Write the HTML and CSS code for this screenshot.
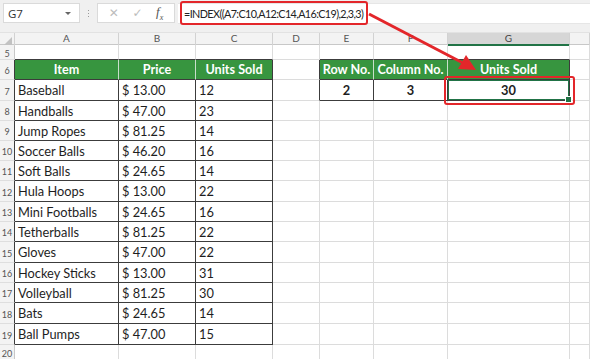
FILE: index.html
```html
<!DOCTYPE html>
<html lang="en">
<head>
  <meta charset="UTF-8" />
  <title>INDEX with multiple ranges</title>
  <link rel="stylesheet" href="styles.css">
</head>
<body>
  <div class="app">
    <!-- formula bar -->
    <div class="toolbar">
      <div class="namebox"><span>G7</span><span class="caret"></span></div>
      <div class="grip"><i></i><i></i><i></i></div>
      <div class="fxbox">
        <span class="btn">✕</span>
        <span class="btn">✓</span>
        <span class="fx">f<sub>x</sub></span>
      </div>
      <div class="formula"><span class="callout">=INDEX((A7:C10,A12:C14,A16:C19),2,3,3)</span></div>
    </div>

    <!-- sheet -->
    <div class="sheet">
      <div class="row colhead">
        <div class="corner"></div><div>A</div><div>B</div><div>C</div><div>D</div><div>E</div><div>F</div><div class="active">G</div><div></div>
      </div>
      <div class="row r5">
        <div class="rh">5</div><div class="c bb"></div><div class="c bb"></div><div class="c bb"></div><div class="c"></div><div class="c bb"></div><div class="c bb"></div><div class="c bb"></div><div class="c"></div>
      </div>
      <div class="row">
        <div class="rh edge">6</div><div class="c t hd">Item</div><div class="c t hd">Price</div><div class="c t hd">Units Sold</div><div class="c br"></div><div class="c t hd">Row No.</div><div class="c t hd">Column No.</div><div class="c t hd">Units Sold</div><div class="c"></div>
      </div>
      <div class="row h21">
        <div class="rh edge">7</div><div class="c t">Baseball</div><div class="c t">$ 13.00</div><div class="c t">12</div><div class="c br"></div><div class="c t mid">2</div><div class="c t mid">3</div><div class="c t mid sel">30</div><div class="c"></div>
      </div>
      <div class="row">
        <div class="rh edge">8</div><div class="c t">Handballs</div><div class="c t">$ 47.00</div><div class="c t">23</div><div class="c"></div><div class="c"></div><div class="c"></div><div class="c"></div><div class="c"></div>
      </div>
      <div class="row">
        <div class="rh edge">9</div><div class="c t">Jump Ropes</div><div class="c t">$ 81.25</div><div class="c t">14</div><div class="c"></div><div class="c"></div><div class="c"></div><div class="c"></div><div class="c"></div>
      </div>
      <div class="row">
        <div class="rh edge">10</div><div class="c t">Soccer Balls</div><div class="c t">$ 46.20</div><div class="c t">16</div><div class="c"></div><div class="c"></div><div class="c"></div><div class="c"></div><div class="c"></div>
      </div>
      <div class="row">
        <div class="rh edge">11</div><div class="c t">Soft Balls</div><div class="c t">$ 24.65</div><div class="c t">14</div><div class="c"></div><div class="c"></div><div class="c"></div><div class="c"></div><div class="c"></div>
      </div>
      <div class="row h21">
        <div class="rh edge">12</div><div class="c t">Hula Hoops</div><div class="c t">$ 13.00</div><div class="c t">22</div><div class="c"></div><div class="c"></div><div class="c"></div><div class="c"></div><div class="c"></div>
      </div>
      <div class="row">
        <div class="rh edge">13</div><div class="c t">Mini Footballs</div><div class="c t">$ 24.65</div><div class="c t">16</div><div class="c"></div><div class="c"></div><div class="c"></div><div class="c"></div><div class="c"></div>
      </div>
      <div class="row">
        <div class="rh edge">14</div><div class="c t">Tetherballs</div><div class="c t">$ 81.25</div><div class="c t">22</div><div class="c"></div><div class="c"></div><div class="c"></div><div class="c"></div><div class="c"></div>
      </div>
      <div class="row h21">
        <div class="rh edge">15</div><div class="c t">Gloves</div><div class="c t">$ 47.00</div><div class="c t">22</div><div class="c"></div><div class="c"></div><div class="c"></div><div class="c"></div><div class="c"></div>
      </div>
      <div class="row">
        <div class="rh edge">16</div><div class="c t">Hockey Sticks</div><div class="c t">$ 13.00</div><div class="c t">31</div><div class="c"></div><div class="c"></div><div class="c"></div><div class="c"></div><div class="c"></div>
      </div>
      <div class="row">
        <div class="rh edge">17</div><div class="c t">Volleyball</div><div class="c t">$ 81.25</div><div class="c t">30</div><div class="c"></div><div class="c"></div><div class="c"></div><div class="c"></div><div class="c"></div>
      </div>
      <div class="row h21">
        <div class="rh edge">18</div><div class="c t">Bats</div><div class="c t">$ 24.65</div><div class="c t">14</div><div class="c"></div><div class="c"></div><div class="c"></div><div class="c"></div><div class="c"></div>
      </div>
      <div class="row h21">
        <div class="rh edge">19</div><div class="c t">Ball Pumps</div><div class="c t">$ 47.00</div><div class="c t">15</div><div class="c"></div><div class="c"></div><div class="c"></div><div class="c"></div><div class="c"></div>
      </div>
      <div class="row last">
        <div class="rh">20</div><div class="c"></div><div class="c"></div><div class="c"></div><div class="c"></div><div class="c"></div><div class="c"></div><div class="c"></div><div class="c"></div>
      </div>
    </div>

    <!-- arrow from the formula to the result cell -->
    <svg class="arrow" width="590" height="359" viewBox="0 0 590 359">
      <line x1="369" y1="14" x2="463" y2="63" stroke="#e3262a" stroke-width="3"/>
      <polygon points="476,70 458,69 466,55" fill="#e3262a"/>
    </svg>
  </div>
</body>
</html>
```

FILE: styles.css
```css
:root {
  --green: #37953f;
  --grid: #dcdcdc;
  --edge: #3c3c3c;
  --red: #e3262a;
  --sel: #217346;
}
* { box-sizing: border-box; margin: 0; padding: 0; }
body {
  background: #fff;
  font-family: 'Lato', 'Liberation Sans', sans-serif;
  color: #1e1e1e;
}
.app {
  position: relative;
  width: 590px;
  height: 359px;
  overflow: hidden;
}

/* formula bar */
.toolbar {
  height: 33px;
  background: #f0f0f0;
  display: flex;
  align-items: flex-start;
  padding-top: 3px;
  padding-left: 3px;
  border-bottom: 1px solid #e2e2e2;
}
.namebox {
  width: 77px;
  height: 20px;
  background: #fff;
  border: 1px solid #dadada;
  display: flex;
  align-items: center;
  justify-content: space-between;
  padding: 0 8px 0 4px;
  font-family: 'Open Sans', sans-serif;
  font-size: 11.5px;
  color: #333;
}
.caret {
  width: 0;
  height: 0;
  border-left: 3px solid transparent;
  border-right: 3px solid transparent;
  border-top: 3px solid #666;
}
.grip {
  width: 17px;
  height: 20px;
  display: flex;
  flex-direction: column;
  align-items: center;
  justify-content: center;
  gap: 2px;
}
.grip i {
  width: 1px;
  height: 1px;
  background: #9a9a9a;
}
.fxbox {
  width: 78px;
  height: 20px;
  background: #fff;
  border: 1px solid #dadada;
  display: flex;
  align-items: center;
  justify-content: space-around;
  padding: 0 4px;
}
.btn {
  font-size: 12px;
  color: #bcbcbc;
  font-family: 'DejaVu Sans', sans-serif;
}
.fx {
  font-family: 'Liberation Serif', serif;
  font-style: italic;
  font-size: 13px;
  color: #555;
}
.fx sub { font-size: 8px; }
.formula {
  flex: 1;
  height: 21px;
  margin-left: 3px;
  background: #fff;
  border-top: 1px solid #e6e6e6;
  border-bottom: 1px solid #e6e6e6;
  display: flex;
  align-items: center;
  padding-left: 6px;
  font-family: 'Lato', sans-serif;
  font-size: 10.8px;
  letter-spacing: -0.6px;
  color: #222;
}
.callout {
  position: relative;
}
.callout::after {
  content: '';
  position: absolute;
  left: -4px;
  right: -5px;
  top: -6px;
  bottom: -5px;
  border: 2px solid var(--red);
  border-radius: 3px;
}

/* sheet */
.row {
  display: grid;
  grid-template-columns: 15px 104px 77px 77px 47px 54px 74px 122px 1fr;
  height: 20px;
}
.row.h21 { height: 21px; }
.row.r5 { height: 15px; }
.row.last { height: 14px; }
.colhead {
  height: 12px;
  background: #f3f3f3;
  font-size: 10px;
  color: #555;
  border-bottom: 1px solid #c8c8c8;
}
.colhead div {
  text-align: center;
  line-height: 11px;
  border-right: 1px solid #d2d2d2;
}
.colhead .active {
  background: #d6d6d6;
  border-bottom: 2px solid var(--sel);
  color: #444;
}
.corner {
  position: relative;
}
.corner::after {
  content: '';
  position: absolute;
  right: 2px;
  bottom: 1px;
  border-left: 8px solid transparent;
  border-bottom: 8px solid #c2c2c2;
}
.rh {
  background: #f3f3f3;
  border-right: 1px solid #c8c8c8;
  border-bottom: 1px solid #dedede;
  font-size: 9px;
  color: #555;
  display: flex;
  align-items: center;
  justify-content: center;
  padding-top: 2px;
}
.last .rh { align-items: flex-start; padding-top: 3px; }
.rh.edge { border-right-color: var(--edge); }
.c {
  border-right: 1px solid var(--grid);
  border-bottom: 1px solid var(--grid);
  font-size: 12.8px;
  line-height: 20px;
  padding: 0 3px;
  white-space: nowrap;
  overflow: hidden;
}
.c.bb { border-bottom-color: var(--edge); }
.c.br { border-right-color: var(--edge); }
.c.t {
  border-right-color: var(--edge);
  border-bottom-color: var(--edge);
}
.c.hd {
  background: var(--green);
  color: #fff;
  font-weight: 700;
  font-size: 12.6px;
  text-align: center;
  padding: 0;
  border-right-color: #c9dfcb;
}
.c.hd:nth-child(4), .c.hd:nth-child(8) { border-right-color: var(--edge); }
.c.mid {
  text-align: center;
  font-weight: 700;
}
.c.sel {
  position: relative;
  overflow: visible;
  box-shadow: inset 0 0 0 1px var(--sel);
}
.c.sel::before {
  content: '';
  position: absolute;
  left: -4px;
  right: -6px;
  top: -4px;
  bottom: -5px;
  border: 2px solid var(--red);
  border-radius: 3px;
}
.c.sel::after {
  content: '';
  position: absolute;
  right: -3px;
  bottom: -3px;
  width: 5px;
  height: 5px;
  background: var(--sel);
  border: 1px solid #fff;
}

.arrow {
  position: absolute;
  left: 0;
  top: 0;
  pointer-events: none;
}
```
